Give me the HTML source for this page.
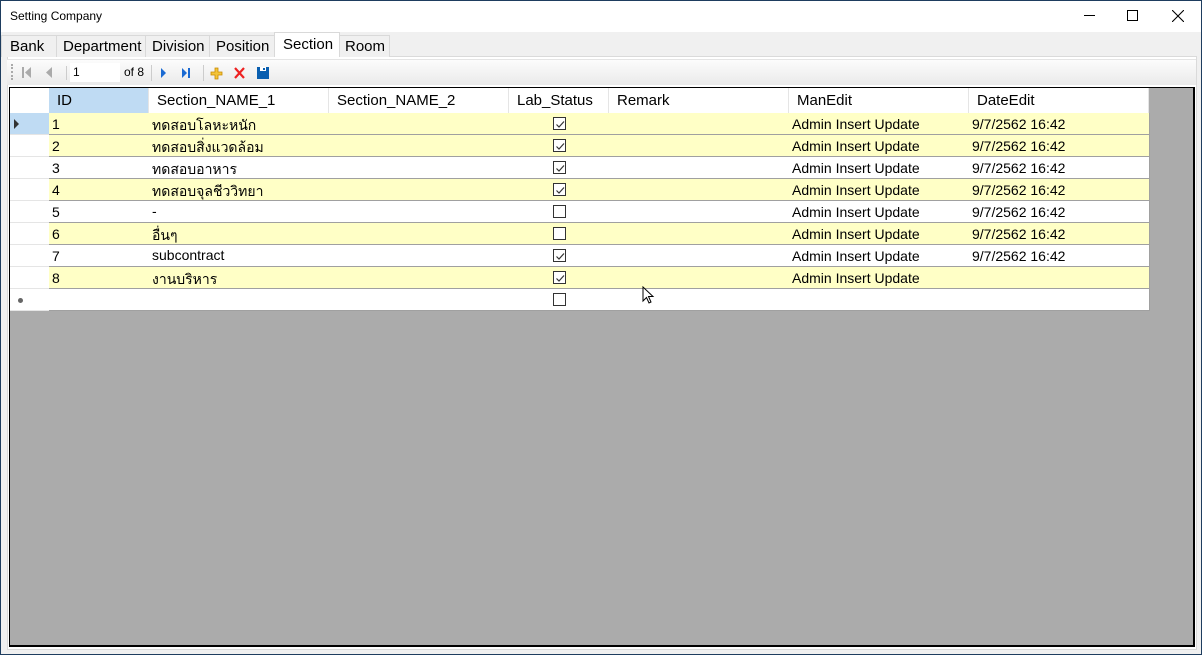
<!DOCTYPE html>
<html><head><meta charset="utf-8"><style>
*{margin:0;padding:0;box-sizing:border-box}
body{width:1202px;height:655px;overflow:hidden;background:#fff;font-family:"Liberation Sans",sans-serif;position:relative}
.a{position:absolute}
.win{left:0;top:0;width:1202px;height:655px;border:1px solid #1e3d5f}
.title{left:10px;top:9px;font-size:12px;color:#000}
.tabs{left:1px;top:32px;width:1200px;height:622px;background:#f0f0f0}
.tab{position:absolute;top:35px;height:22px;font-size:15px;color:#000;padding:2px 0 0 8px;border:1px solid #d9d9d9;border-bottom:none;background:#f0f0f0}
.tbar{left:7px;top:59px;width:1189px;height:26px;background:linear-gradient(#fcfcfc,#eaeaea);border-top:1px solid #e4e4e4}
.grid{left:9px;top:87px;width:1186px;height:560px;background:#ababab;border:1px solid #000;border-right:2px solid #000;border-bottom:2px solid #000}
.c{position:absolute;height:22px;border-right:1px solid #a0a0a0;border-bottom:1px solid #a0a0a0;font-size:14px;padding:3px 0 0 3px;white-space:nowrap;overflow:hidden}
.h{background:#fff;border-right:1px solid #e5e5e5;border-bottom:none;font-size:15px;padding:4px 0 0 8px;height:25px}
.cb{position:absolute;left:44px;top:4px;width:13px;height:13px;border:1px solid #333;background:#fff}
</style></head><body>
<div class="a win"></div>
<div class="a title">Setting Company</div>
<div class="a" style="left:1084px;top:15px;width:11px;height:1px;background:#000"></div>
<div class="a" style="left:1127px;top:10px;width:11px;height:11px;border:1px solid #000"></div>
<svg class="a" style="left:1172px;top:10px" width="12" height="12"><path d="M0 0L12 12M12 0L0 12" stroke="#000" stroke-width="1.1"/></svg>
<div class="a tabs"></div>
<div class="a" style="left:7px;top:56px;width:1190px;height:594px;background:#fff;border:1px solid #dadada"></div>
<div class="tab" style="left:1px;width:56px;padding-left:8px">Bank</div>
<div class="tab" style="left:56px;width:90px;padding-left:6px">Department</div>
<div class="tab" style="left:145px;width:65px;padding-left:6px">Division</div>
<div class="tab" style="left:209px;width:66px;padding-left:6px">Position</div>
<div class="tab" style="left:274px;top:32px;height:25px;width:66px;background:#fff;padding-top:3px">Section</div>
<div class="tab" style="left:339px;width:51px;padding-left:5px">Room</div>
<div class="a tbar"></div>
<div class="a" style="left:11px;top:64px;width:2px;height:16px;border-left:2px dotted #aaa"></div>
<svg class="a" style="left:20px;top:66px" width="60" height="14"><rect x="2" y="1" width="2" height="11" fill="#aaa"/><path d="M11 1L5 6.5L11 12Z" fill="#aaa"/><path d="M32 1L26 6.5L32 12Z" fill="#aaa"/><rect x="46" y="0" width="1" height="15" fill="#ccc"/></svg>
<div class="a" style="left:70px;top:63px;width:50px;height:19px;background:#fff;font-size:12px;padding:2px 0 0 3px">1</div>
<div class="a" style="left:124px;top:65px;font-size:12px">of 8</div>
<svg class="a" style="left:150px;top:64px" width="130" height="18"><rect x="1" y="1" width="1" height="16" fill="#ccc"/><path d="M11 4L16 9L11 14Z" fill="#1b6ad2"/><path d="M32 4L37 9L32 14Z" fill="#1b6ad2"/><rect x="38" y="4" width="2" height="10" fill="#1b6ad2"/><rect x="53" y="1" width="1" height="16" fill="#ccc"/><path d="M65 4h3v4h4v3h-4v4h-3v-4h-4v-3h4z" fill="#f3c43a" stroke="#c98a00" stroke-width=".8"/><path d="M85 4L94 14M94 4L85 14" stroke="#e22" stroke-width="2.2"/><rect x="107" y="3" width="12" height="12" fill="#0a5fb0"/><rect x="110" y="3" width="6" height="4" fill="#fff"/><rect x="113" y="4" width="2" height="2" fill="#0a5fb0"/></svg>
<div class="a grid"></div>
<div id="g"></div>
<div class="a" style="left:10px;top:88px">
<div class="c h" style="left:0;width:40px"></div>
<div class="c h" style="left:39px;width:100px;background:#bfdbf3">ID</div>
<div class="c h" style="left:139px;width:180px">Section_NAME_1</div>
<div class="c h" style="left:319px;width:180px">Section_NAME_2</div>
<div class="c h" style="left:499px;width:100px">Lab_Status</div>
<div class="c h" style="left:599px;width:180px">Remark</div>
<div class="c h" style="left:779px;width:180px">ManEdit</div>
<div class="c h" style="left:959px;width:180px">DateEdit</div>
</div>
<script>
var rows=[["1","ทดสอบโลหะหนัก",1,1],["2","ทดสอบสิ่งแวดล้อม",1,1],["3","ทดสอบอาหาร",1,1],["4","ทดสอบจุลชีววิทยา",1,1],["5","-",0,1],["6","อื่นๆ",0,1],["7","subcontract",1,1],["8","งานบริหาร",1,0],["","",0,2]];
var yel=[1,1,0,1,0,1,0,1,0];
var h='';
rows.forEach(function(r,i){var y=113+i*22;var bg=yel[i]?'#ffffc6':'#fff';
var rh=i==0?'#bfdbf3':'#fff';
var mark=i==0?'<svg width="8" height="10" style="position:absolute;left:3px;top:6px"><path d="M1 0L6 5L1 10Z" fill="#333"/></svg>':(i==8?'<div style="position:absolute;left:8px;top:9px;width:5px;height:5px;border-radius:50%;background:#666"></div>':'');
var chk=r[2]?'<svg width="13" height="13" style="position:absolute;left:0;top:0"><path d="M2.5 6.5L5 9L10 3.5" stroke="#333" fill="none" stroke-width="1.2"/></svg>':'';
h+='<div class="a" style="left:10px;top:'+y+'px">'+
'<div class="c" style="left:0;width:40px;background:'+rh+';border-right-color:#a0a0a0;border-bottom-color:#e5e5e5">'+mark+'</div>'+
'<div class="c" style="left:39px;width:101px;background:'+bg+'">'+r[0]+'</div>'+
'<div class="c" style="left:139px;width:181px;background:'+bg+';font-size:14px;padding-top:2px">'+r[1]+'</div>'+
'<div class="c" style="left:319px;width:181px;background:'+bg+'"></div>'+
'<div class="c" style="left:499px;width:101px;background:'+bg+'"><div class="cb">'+chk+'</div></div>'+
'<div class="c" style="left:599px;width:181px;background:'+bg+'"></div>'+
'<div class="c" style="left:779px;width:181px;background:'+bg+'">'+(r[3]<2?'Admin Insert Update':'')+'</div>'+
'<div class="c" style="left:959px;width:181px;background:'+bg+'">'+(r[3]==1?'9/7/2562 16:42':'')+'</div></div>';});
document.getElementById('g').innerHTML=h;
</script>
<svg class="a" style="left:642px;top:286px" width="14" height="20"><path d="M1 1L1 15L4.5 11.5L7 17L9 16L6.5 10.5L11 10.5Z" fill="#fff" stroke="#000" stroke-width="1"/></svg>
</body></html>
